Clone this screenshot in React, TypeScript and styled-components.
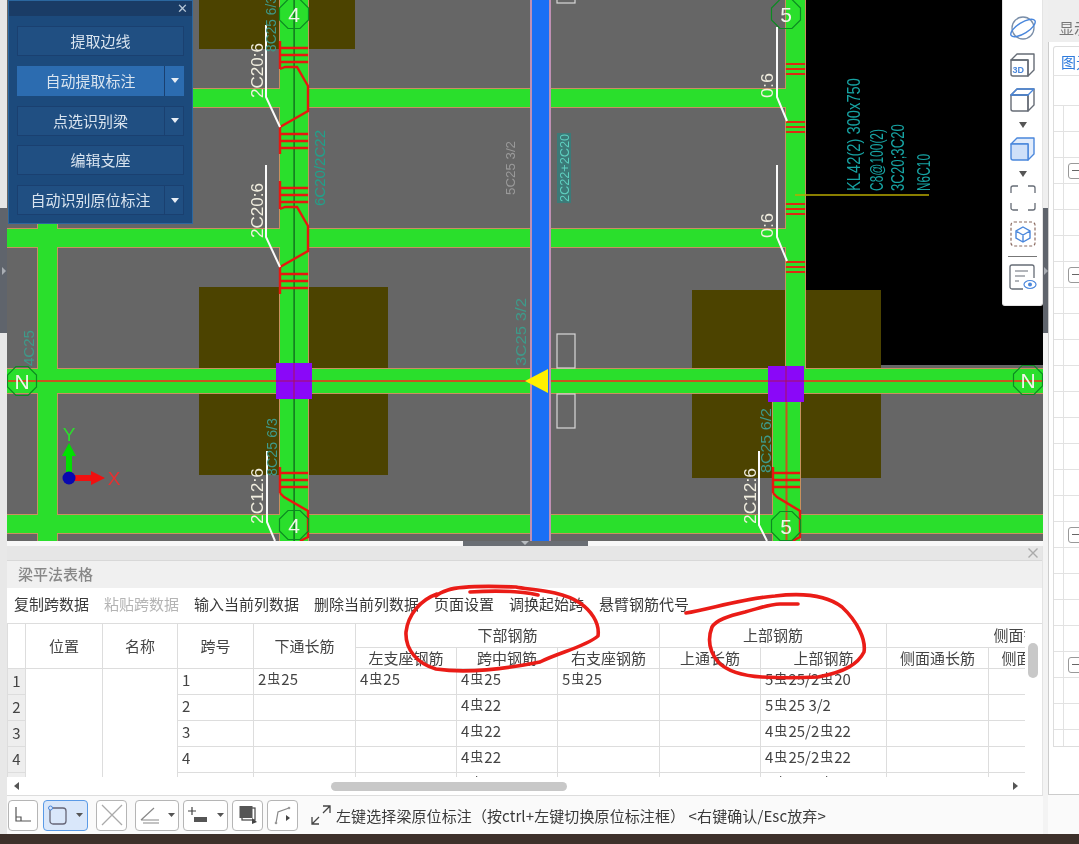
import React from "react";
import styled, { createGlobalStyle } from "styled-components";

const CJK = `"Noto Sans CJK SC", "Noto Sans", sans-serif`;

const Global = createGlobalStyle`
  html, body { margin: 0; padding: 0; background: #fff; overflow: hidden; }
  #root { width: 1079px; height: 844px; }
`;

const Shell = styled.div`
  width: 1079px;
  height: 844px;
  display: flex;
  flex-direction: column;
  font-family: ${CJK};
  overflow: hidden;
  filter: blur(0.35px);
`;
const Main = styled.div`
  flex: 0 0 834px;
  display: flex;
  background: #fafafa;
`;
const Taskbar = styled.div`
  flex: 0 0 10px;
  background: #3d302a;
`;
const EdgeRail = styled.div<{ $top: string; $bottom: string; $width: number }>`
  flex: 0 0 ${(p) => p.$width}px;
  display: flex;
  flex-direction: column;
  background: ${(p) => p.$bottom};
  &::before {
    content: "";
    flex: 0 0 208px;
    background: ${(p) => p.$top};
  }
`;
const EdgeGrip = styled.div`
  flex: 0 0 125px;
  background: #5f646c;
  display: flex;
  align-items: center;
  justify-content: center;
  &::after {
    content: "";
    border-top: 4px solid transparent;
    border-bottom: 4px solid transparent;
    border-left: 4px solid #a9adb3;
  }
`;
const Workspace = styled.div`
  flex: 0 0 1036px;
  display: flex;
  flex-direction: column;
  position: relative;
`;
const Canvas = styled.div`
  flex: 0 0 541px;
  position: relative;
  overflow: hidden;
  background: #666;
`;
const Drawing = styled.svg`
  display: block;
  width: 1036px;
  height: 541px;
`;
const FloatPanel = styled.div`
  position: absolute;
  left: 1px;
  top: 0;
  width: 185px;
  height: 224px;
  box-sizing: border-box;
  background: #1c4a7c;
  border: 1px solid #2b679f;
  display: flex;
  flex-direction: column;
`;
const FloatHead = styled.div`
  flex: 0 0 15px;
  background: #1a3c66;
  display: flex;
  justify-content: flex-end;
  align-items: center;
  padding-right: 4px;
  color: #b8c8d8;
  font: 13px/15px "Liberation Sans", sans-serif;
`;
const FloatList = styled.div`
  padding: 10px 8px 0 8px;
  display: flex;
  flex-direction: column;
  gap: 9.8px;
`;
const FloatButton = styled.div<{ $active?: boolean }>`
  height: 30px;
  display: flex;
  background: ${(p) => (p.$active ? "#2c6cb0" : "#204f82")};
  box-shadow: inset 0 0 0 1px ${(p) => (p.$active ? "#2c6cb0" : "#1a4070")};
  color: #d9e4ef;
  font-size: 15px;
  line-height: 30px;
`;
const FloatLabel = styled.div`
  flex: 1;
  text-align: center;
  white-space: nowrap;
`;
const FloatCaret = styled.div`
  flex: 0 0 19px;
  border-left: 1px solid #1a4070;
  display: flex;
  align-items: center;
  justify-content: center;
  &::after {
    content: "";
    border-left: 4.5px solid transparent;
    border-right: 4.5px solid transparent;
    border-top: 5px solid #e8eef5;
  }
`;
const ViewBar = styled.div`
  position: absolute;
  right: 0;
  top: 0;
  width: 41px;
  height: 306px;
  box-sizing: border-box;
  padding-top: 10px;
  background: #fff;
  border: 1px solid #e4e4e4;
  border-top: 0;
  border-radius: 0 0 3px 3px;
  display: flex;
  flex-direction: column;
  align-items: center;
`;
const ViewSlot = styled.div<{ $h: number }>`
  flex: 0 0 ${(p) => p.$h}px;
  display: flex;
  align-items: center;
  justify-content: center;
`;
const ViewCaret = styled.div`
  width: 0;
  border-left: 4px solid transparent;
  border-right: 4px solid transparent;
  border-top: 6px solid #555;
`;
const ViewRule = styled.div`
  flex: 0 0 1px;
  width: 29px;
  background: #777;
`;
const Splitter = styled.div`
  flex: 0 0 5px;
  background: #f8f8f8;
  display: flex;
  justify-content: center;
`;
const SplitTab = styled.div`
  width: 125px;
  background: #6a6e74;
  display: flex;
  justify-content: center;
  &::after {
    content: "";
    height: 0;
    border-left: 4px solid transparent;
    border-right: 4px solid transparent;
    border-top: 4px solid #b8bcc0;
  }
`;
const Panel = styled.div`
  flex: 0 0 250px;
  display: flex;
  flex-direction: column;
  background: #fff;
  border-bottom: 1px solid #ddd;
  border-right: 1px solid #e3e3e3;
  box-sizing: border-box;
`;
const PanelClose = styled.div`
  flex: 0 0 15px;
  box-sizing: border-box;
  background: #e6e6e6;
  border-bottom: 1px solid #d8d8d8;
  display: flex;
  justify-content: flex-end;
  align-items: center;
  padding-right: 3px;
`;
const PanelTitle = styled.div`
  flex: 0 0 27px;
  background: #f0f0f0;
  padding-left: 11px;
  color: #888;
  font-size: 15px;
  font-weight: 500;
  line-height: 26px;
`;
const PanelTools = styled.div`
  flex: 0 0 35px;
  box-sizing: border-box;
  display: flex;
  align-items: center;
  gap: 15px;
  padding: 0 0 5px 7px;
  font-size: 15px;
  color: #333;
`;
const ToolLink = styled.span<{ $off?: boolean }>`
  color: ${(p) => (p.$off ? "#b4b4b4" : "#3a3a3a")};
  white-space: nowrap;
`;
const GridRow = styled.div`
  flex: 0 0 154px;
  display: flex;
  border-top: 1px solid #ddd;
  box-sizing: border-box;
`;
const TableClip = styled.div`
  width: 1018px;
  height: 153px;
  overflow: hidden;
`;
const Sheet = styled.table`
  table-layout: fixed;
  width: 1153px;
  border-collapse: collapse;
  font-size: 15px;
  color: #444;
`;
const Th = styled.th<{ $tall?: boolean }>`
  box-sizing: border-box;
  height: ${(p) => (p.$tall ? 23 : 21)}px;
  padding: 0;
  font-weight: 400;
  text-align: center;
  line-height: 18px;
  white-space: nowrap;
  overflow: hidden;
  border: 1px solid #ddd;
  border-top: 0;
`;
const RowNo = styled.td`
  box-sizing: border-box;
  height: 26px;
  padding: 0;
  text-align: center;
  background: #eee;
  border: 1px solid #ddd;
  font-size: 15px;
  line-height: 20px;
  color: #444;
`;
const Td = styled.td`
  box-sizing: border-box;
  height: 26px;
  padding: 0 0 3px 4px;
  line-height: 20px;
  white-space: nowrap;
  overflow: hidden;
  border: 1px solid #ddd;
`;
const RebarMark = styled.span`
  font-size: 13px;
  position: relative;
  top: -2px;
  margin: 0 1px;
`;
const VScroll = styled.div`
  flex: 1;
  padding: 19px 0 0 3px;
`;
const VThumb = styled.div`
  width: 10px;
  height: 35px;
  border-radius: 5px;
  background: #c8c8c8;
`;
const HScroll = styled.div`
  flex: 1;
  display: flex;
  align-items: center;
  padding: 0 24px 0 7px;
`;
const Arrow = styled.div<{ $right?: boolean }>`
  width: 0;
  border-top: 4.5px solid transparent;
  border-bottom: 4.5px solid transparent;
  ${(p) => (p.$right ? "border-left: 5px solid #555;" : "border-right: 5px solid #555;")}
`;
const HTrack = styled.div`
  flex: 1;
  padding-left: 312px;
`;
const HThumb = styled.div`
  width: 236px;
  height: 9px;
  border-radius: 5px;
  background: #c8c8c8;
`;
const Status = styled.div`
  flex: 0 0 38px;
  display: flex;
  align-items: center;
  padding-left: 1px;
  background: #fafafa;
`;
const ToolBtn = styled.div<{ $w: number; $on?: boolean; $ml: number }>`
  width: ${(p) => p.$w}px;
  height: 31px;
  margin-left: ${(p) => p.$ml}px;
  box-sizing: border-box;
  border: 1px solid ${(p) => (p.$on ? "#5a9ae6" : "#b5b5b5")};
  border-radius: 4px;
  background: ${(p) => (p.$on ? "#d9e7fa" : "#fff")};
  display: flex;
  align-items: center;
  justify-content: center;
`;
const StatusGlyph = styled.div`
  margin-left: 13px;
  display: flex;
  align-items: center;
`;
const StatusText = styled.div`
  margin-left: 5px;
  font-size: 15px;
  letter-spacing: 0.1px;
  color: #3a3a3a;
  white-space: pre;
`;
const Side = styled.div`
  flex: 1;
  height: 834px;
  overflow: hidden;
  display: flex;
  flex-direction: column;
`;
const SideHead = styled.div`
  flex: 0 0 42px;
  min-height: 0;
  overflow: hidden;
  background: #eee;
  padding-left: 11px;
  font-size: 15px;
  line-height: 56px;
  color: #777;
  white-space: nowrap;
`;
const SideBody = styled.div`
  flex: 0 0 753px;
  box-sizing: border-box;
  border-left: 1px solid #ccc;
  border-bottom: 1px solid #ccc;
  padding: 4px 0 0 4px;
  background: #fff;
`;
const SideTab = styled.div`
  width: 60px;
  height: 29px;
  box-sizing: border-box;
  border: 1px solid #ddd;
  border-bottom: 0;
  border-radius: 3px 0 0 0;
  padding-left: 7px;
  font-size: 15px;
  line-height: 29px;
  color: #2f7bdc;
  white-space: nowrap;
`;
const SideTree = styled.div`
  height: 672px;
  box-sizing: border-box;
  border: 1px solid #ddd;
  border-right: 0;
  border-top: 1px solid #e4e4e4;
  padding-top: 29px;
  overflow: hidden;
`;
const TreeRow = styled.div`
  height: 26px;
  box-sizing: border-box;
  border-top: 1px solid #e2e2e2;
  display: flex;
  align-items: center;
  &::before {
    content: "";
    flex: 0 0 9px;
    align-self: stretch;
    border-right: 1px solid #e2e2e2;
  }
`;
const Minus = styled.div`
  margin-left: 4px;
  flex: 0 0 20px;
  height: 16px;
  box-sizing: border-box;
  border: 1px solid #999;
  border-radius: 3px;
  display: flex;
  align-items: center;
  padding-left: 3px;
  &::after {
    content: "";
    width: 7px;
    height: 1px;
    background: #666;
  }
`;
const Ink = styled.svg`
  position: absolute;
  left: 0;
  top: 0;
  width: 1036px;
  height: 834px;
  pointer-events: none;
`;

const VLabel = ({ x, y, len, color, size = 15, children }: { x: number; y: number; len: number; color: string; size?: number; children: string }) => (
  <text
    x={x}
    y={y}
    transform={`rotate(-90 ${x} ${y})`}
    textLength={len}
    lengthAdjust="spacingAndGlyphs"
    fill={color}
    fontSize={size}
    fontFamily='"Liberation Sans", sans-serif'
  >
    {children}
  </text>
);

const Axis = ({ x, y, label }: { x: number; y: number; label: string }) => (
  <g>
    <polygon
      points={`${x - 6},${y - 14.5} ${x + 6},${y - 14.5} ${x + 14.5},${y - 6} ${x + 14.5},${y + 6} ${x + 6},${y + 14.5} ${x - 6},${y + 14.5} ${x - 14.5},${y + 6} ${x - 14.5},${y - 6}`}
      fill="none"
      stroke="#0c8a22"
      strokeWidth="1.2"
    />
    <text x={x} y={y + 7.5} textAnchor="middle" fill="#f4f4ec" fontSize="21" fontFamily='"Liberation Sans", sans-serif'>
      {label}
    </text>
  </g>
);

const beamsH: [number, number, number, number][] = [
  [185, 89, 610, 18],
  [7, 229, 790, 18],
  [7, 369, 1036, 24],
  [7, 515, 1036, 18],
];
const beamsV: [number, number, number, number][] = [
  [38, 224, 19, 317],
  [280, 0, 28, 541],
  [786, 0, 19, 393],
  [773, 393, 27, 148],
];

const Stirrup = ({ dy }: { dy: number }) => (
  <g transform={`translate(0 ${dy})`} fill="none" stroke="#e8170f" strokeWidth="2.4">
    <path d="M280 41V69M280 48H308M280 55H308M280 62H308" />
    <path d="M280 69L285 67H297L308 86V111L280 127" />
    <path d="M280 127V154M280 134H308M280 141H308M280 148H308" />
  </g>
);
const Ties = ({ y }: { y: number }) => (
  <path d={`M786 ${y}H805M786 ${y + 5}H805M786 ${y + 10}H805`} fill="none" stroke="#dd2a12" strokeWidth="2.2" />
);
const BottomStirrup = ({ dx, w }: { dx: number; w: number }) => (
  <g fill="none" stroke="#e8170f" strokeWidth="2.4">
    <path d={`M${dx} 467V493M${dx} 473H${dx + w}M${dx} 480H${dx + w}M${dx} 487H${dx + w}`} />
    <path d={`M${dx} 493L${dx + 4} 497L${dx + w} 511V537L${dx + w - 8} 541`} />
  </g>
);

const CadDrawing = () => (
  <Drawing viewBox="7 0 1036 541">
    <rect x="7" y="0" width="1036" height="541" fill="#666" />
    <rect x="806" y="0" width="237" height="365" fill="#000" />
    <rect x="199" y="0" width="156" height="49" fill="#4c4300" />
    <rect x="199" y="287" width="189" height="188" fill="#4c4300" />
    <rect x="692" y="290" width="189" height="188" fill="#4c4300" />
    {[...beamsH, ...beamsV].map(([x, y, w, h], i) => (
      <rect key={i} x={x - 1} y={y - 1} width={w + 2} height={h + 2} fill="#c9905f" />
    ))}
    {[...beamsH, ...beamsV].map(([x, y, w, h], i) => (
      <rect key={i} x={x} y={y} width={w} height={h} fill="#2adf2c" />
    ))}
    <rect x="7" y="380" width="1036" height="2" fill="#c8551f" />
    <rect x="293.5" y="0" width="1.2" height="541" fill="#0d5a1c" />
    <rect x="785.5" y="393" width="2" height="148" fill="#c8551f" />
    <rect x="530" y="0" width="21" height="541" fill="#c090b4" />
    <rect x="532" y="0" width="17" height="541" fill="#1a6ff5" />
    <rect x="276" y="363" width="36" height="36" fill="#8a08f8" />
    <rect x="768" y="366" width="36" height="36" fill="#8a08f8" />
    <path d="M294 363V399M276 381H312M768 381H804M786 366V402" stroke="#a8105a" strokeWidth="1" />
    <polygon points="548,369 548,393 525,381" fill="#fff000" />
    <g fill="none" stroke="#d8d8d8" strokeWidth="1.2">
      <rect x="557" y="-5" width="18" height="8" />
      <rect x="557" y="334" width="18" height="34" />
      <rect x="557" y="394" width="18" height="34" />
    </g>
    <Stirrup dy={0} />
    <Stirrup dy={140} />
    <BottomStirrup dx={280} w={28} />
    <BottomStirrup dx={773} w={27} />
    {[64, 122, 204, 262].map((y) => (
      <Ties key={y} y={y} />
    ))}
    <g fill="none" stroke="#fafafa" strokeWidth="2">
      <path d="M266 25V97L280 127" />
      <path d="M266 165V237L280 267" />
      <path d="M267 451V522L275 541" />
      <path d="M777 27V97L787 121" />
      <path d="M777 165V237L787 261" />
      <path d="M759 451V525L767 541" />
    </g>
    <path d="M795 195H929" stroke="#b8a800" strokeWidth="1.5" />

    <VLabel x={263} y={98} len={55} color="#f2efe0" size={16}>2C20:6</VLabel>
    <VLabel x={263} y={238} len={55} color="#f2efe0" size={16}>2C20:6</VLabel>
    <VLabel x={263} y={524} len={56} color="#f2efe0" size={16}>2C12:6</VLabel>
    <VLabel x={756} y={524} len={56} color="#f2efe0" size={16}>2C12:6</VLabel>
    <VLabel x={773} y={98} len={25} color="#f2efe0" size={16}>0:6</VLabel>
    <VLabel x={773} y={238} len={25} color="#f2efe0" size={16}>0:6</VLabel>

    <VLabel x={860} y={191} len={113} color="#17a3a3" size={18}>KL42(2) 300x750</VLabel>
    <VLabel x={883} y={191} len={62} color="#17a3a3" size={18}>C8@100(2)</VLabel>
    <VLabel x={904} y={191} len={67} color="#17a3a3" size={18}>3C20;3C20</VLabel>
    <VLabel x={930} y={191} len={37} color="#17a3a3" size={18}>N6C10</VLabel>

    <VLabel x={276} y={52} len={56} color="#3e9a8a" size={15}>8C25 6/3</VLabel>
    <VLabel x={325} y={206} len={76} color="#22a08a" size={15}>6C20/2C22</VLabel>
    <VLabel x={515} y={195} len={54} color="#9a9a9a" size={12}>5C25 3/2</VLabel>
    <rect x="557" y="133" width="14" height="70" fill="#3c7a78" />
    <VLabel x={569} y={202} len={68} color="#5fd0c0" size={13}>2C22+2C20</VLabel>
    <VLabel x={277} y={476} len={58} color="#3e9a8a" size={15}>8C25 6/3</VLabel>
    <VLabel x={771} y={473} len={65} color="#3e9a8a" size={15}>8C25 6/2</VLabel>
    <VLabel x={526} y={366} len={68} color="#3e9a8a" size={15}>3C25 3/2</VLabel>
    <VLabel x={34} y={366} len={36} color="#3e9a8a" size={14}>4C25</VLabel>

    <Axis x={294} y={14} label="4" />
    <Axis x={786} y={14} label="5" />
    <Axis x={22} y={381} label="N" />
    <Axis x={1028} y={380} label="N" />
    <Axis x={294} y={525} label="4" />
    <Axis x={786} y={526} label="5" />

    <rect x="66" y="452" width="6" height="26" fill="#00e000" />
    <polygon points="69,443 62,456 76,456" fill="#00e000" />
    <rect x="69" y="475" width="24" height="6" fill="#f01010" />
    <polygon points="105,478 91,471 91,485" fill="#f01010" />
    <circle cx="69" cy="478" r="6.5" fill="#0808b0" />
    <text x="69" y="441" textAnchor="middle" fill="#2adf2c" fontSize="19" fontFamily='"Liberation Sans", sans-serif'>Y</text>
    <text x="114" y="485" textAnchor="middle" fill="#e83030" fontSize="19" fontFamily='"Liberation Sans", sans-serif'>X</text>
  </Drawing>
);

const stroke = { fill: "none", stroke: "#666c76", strokeWidth: 1.3 };
const blue = "#4a87dc";

const IconSphere = () => (
  <svg width="28" height="26" viewBox="0 0 28 26">
    <circle cx="14" cy="13" r="11" fill="none" stroke="#7a8ea8" strokeWidth="1.3" />
    <ellipse cx="14" cy="13" rx="14" ry="5.5" transform="rotate(-32 14 13)" fill="none" stroke={blue} strokeWidth="1.4" />
  </svg>
);
const CubeLines = ({ color, front, side }: { color: string; front: string; side: string }) => (
  <>
    <path d="M2 8L8 2H25V18L19 24V8Z" fill={side} stroke={color} strokeWidth="1.4" strokeLinejoin="round" />
    <path d="M2 8H19V24H4a2 2 0 0 1-2-2Z" fill={front} stroke={color} strokeWidth="1.4" strokeLinejoin="round" />
  </>
);
const Icon3D = () => (
  <svg width="27" height="26" viewBox="0 0 27 26">
    <CubeLines color="#666c76" front="none" side="none" />
    <text x="3.5" y="21" fontSize="9" fontWeight="700" fill={blue} fontFamily='"Liberation Sans", sans-serif'>3D</text>
  </svg>
);
const IconWire = () => (
  <svg width="27" height="26" viewBox="0 0 27 26">
    <CubeLines color="#666c76" front="none" side="none" />
    <path d="M2 8L8 2H25L19 8Z" fill="none" stroke={blue} strokeWidth="1.4" strokeLinejoin="round" />
  </svg>
);
const IconSolid = () => (
  <svg width="27" height="26" viewBox="0 0 27 26">
    <CubeLines color={blue} front="#cfe0f9" side="#e2ecfb" />
  </svg>
);
const IconCorners = () => (
  <svg width="26" height="26" viewBox="0 0 26 26">
    <path d="M1 8V3a2 2 0 0 1 2-2H8M18 1h5a2 2 0 0 1 2 2V8M25 18v5a2 2 0 0 1-2 2H18M8 25H3a2 2 0 0 1-2-2V18" {...stroke} />
  </svg>
);
const IconDashedCube = () => (
  <svg width="26" height="26" viewBox="0 0 26 26">
    <rect x="1" y="1" width="24" height="24" rx="3" fill="none" stroke="#8a6a60" strokeWidth="1.2" strokeDasharray="3 2" />
    <path d="M13 6L20 10V17L13 21L6 17V10ZM6 10L13 14L20 10M13 14V21" fill="none" stroke={blue} strokeWidth="1.4" />
  </svg>
);
const IconDoc = () => (
  <svg width="28" height="26" viewBox="0 0 28 26">
    <path d="M14 25H3a2 2 0 0 1-2-2V3a2 2 0 0 1 2-2H23a2 2 0 0 1 2 2V14" {...stroke} />
    <path d="M6 7H19M6 12H16M6 17H10" stroke="#666c76" strokeWidth="1.2" />
    <ellipse cx="21" cy="20.5" rx="6" ry="4" fill="#fff" stroke={blue} strokeWidth="1.2" />
    <circle cx="21" cy="20.5" r="2" fill={blue} />
  </svg>
);
const MiniCaret = () => (
  <svg width="7" height="5" viewBox="0 0 7 5">
    <polygon points="0,0 7,0 3.5,4" fill="#555" />
  </svg>
);
const BtnRow = styled.div`
  display: flex;
  align-items: center;
  gap: 8px;
`;

const Rebar = ({ value }: { value: string }) => {
  const parts = value.split("#");
  return (
    <>
      {parts.map((p, i) => (
        <React.Fragment key={i}>
          {i > 0 && <RebarMark>虫</RebarMark>}
          {p}
        </React.Fragment>
      ))}
    </>
  );
};

const rows: { n: string; a: string; b: string; c: string; d: string; e: string }[] = [
  { n: "1", a: "2#25", b: "4#25", c: "4#25", d: "5#25", e: "5#25/2#20" },
  { n: "2", a: "", b: "", c: "4#22", d: "", e: "5#25 3/2" },
  { n: "3", a: "", b: "", c: "4#22", d: "", e: "4#25/2#22" },
  { n: "4", a: "", b: "", c: "4#22", d: "", e: "4#25/2#22" },
  { n: "5", a: "", b: "", c: "4#22", d: "", e: "4#25/2#22" },
];
const colWidths = [18, 77, 75, 76, 102, 101, 101, 102, 101, 126, 102, 116, 56];

const floatItems = [
  { label: "提取边线" },
  { label: "自动提取标注", caret: true, active: true },
  { label: "点选识别梁", caret: true },
  { label: "编辑支座" },
  { label: "自动识别原位标注", caret: true },
];
const tools = ["复制跨数据", "粘贴跨数据", "输入当前列数据", "删除当前列数据", "页面设置", "调换起始跨", "悬臂钢筋代号"];
const minusRows = [2, 6, 16, 21];

export default function App() {
  return (
    <>
      <Global />
      <Shell>
        <Main>
          <EdgeRail $top="#e6e6e6" $bottom="#e8e8e8" $width={7}>
            <EdgeGrip />
          </EdgeRail>
          <Workspace>
            <Canvas>
              <CadDrawing />
              <FloatPanel>
                <FloatHead>✕</FloatHead>
                <FloatList>
                  {floatItems.map((f) => (
                    <FloatButton key={f.label} $active={f.active}>
                      <FloatLabel>{f.label}</FloatLabel>
                      {f.caret && <FloatCaret />}
                    </FloatButton>
                  ))}
                </FloatList>
              </FloatPanel>
              <ViewBar>
                <ViewSlot $h={36}><IconSphere /></ViewSlot>
                <ViewSlot $h={38}><Icon3D /></ViewSlot>
                <ViewSlot $h={32}><IconWire /></ViewSlot>
                <ViewSlot $h={18}><ViewCaret /></ViewSlot>
                <ViewSlot $h={30}><IconSolid /></ViewSlot>
                <ViewSlot $h={20}><ViewCaret /></ViewSlot>
                <ViewSlot $h={28}><IconCorners /></ViewSlot>
                <ViewSlot $h={44}><IconDashedCube /></ViewSlot>
                <ViewRule />
                <ViewSlot $h={40}><IconDoc /></ViewSlot>
              </ViewBar>
            </Canvas>
            <Splitter>
              <SplitTab />
            </Splitter>
            <Panel>
              <PanelClose>
                <svg width="12" height="12" viewBox="0 0 12 12">
                  <path d="M1.5 1.5L10.5 10.5M10.5 1.5L1.5 10.5" stroke="#aaa" strokeWidth="1.4" />
                </svg>
              </PanelClose>
              <PanelTitle>梁平法表格</PanelTitle>
              <PanelTools>
                {tools.map((t) => (
                  <ToolLink key={t} $off={t === "粘贴跨数据"}>{t}</ToolLink>
                ))}
              </PanelTools>
              <GridRow>
                <TableClip>
                  <Sheet>
                    <colgroup>
                      {colWidths.map((w, i) => (
                        <col key={i} width={w} />
                      ))}
                    </colgroup>
                    <thead>
                      <tr>
                        <Th $tall rowSpan={2}></Th>
                        <Th $tall rowSpan={2}>位置</Th>
                        <Th $tall rowSpan={2}>名称</Th>
                        <Th $tall rowSpan={2}>跨号</Th>
                        <Th $tall rowSpan={2}>下通长筋</Th>
                        <Th $tall colSpan={3}>下部钢筋</Th>
                        <Th $tall colSpan={2}>上部钢筋</Th>
                        <Th $tall colSpan={3}>侧面钢筋</Th>
                      </tr>
                      <tr>
                        <Th>左支座钢筋</Th>
                        <Th>跨中钢筋</Th>
                        <Th>右支座钢筋</Th>
                        <Th>上通长筋</Th>
                        <Th>上部钢筋</Th>
                        <Th>侧面通长筋</Th>
                        <Th>侧面原位钢筋</Th>
                        <Th>拉筋</Th>
                      </tr>
                    </thead>
                    <tbody>
                      {rows.map((r, i) => (
                        <tr key={r.n}>
                          <RowNo>{r.n}</RowNo>
                          {i === 0 && <Td rowSpan={5} />}
                          {i === 0 && <Td rowSpan={5} />}
                          <Td>{r.n}</Td>
                          <Td><Rebar value={r.a} /></Td>
                          <Td><Rebar value={r.b} /></Td>
                          <Td><Rebar value={r.c} /></Td>
                          <Td><Rebar value={r.d} /></Td>
                          <Td />
                          <Td><Rebar value={r.e} /></Td>
                          <Td />
                          <Td />
                          <Td />
                        </tr>
                      ))}
                    </tbody>
                  </Sheet>
                </TableClip>
                <VScroll>
                  <VThumb />
                </VScroll>
              </GridRow>
              <HScroll>
                <Arrow />
                <HTrack>
                  <HThumb />
                </HTrack>
                <Arrow $right />
              </HScroll>
            </Panel>
            <Status>
              <ToolBtn $w={30} $ml={0}>
                <svg width="18" height="18" viewBox="0 0 18 18">
                  <path d="M2 1V15H17M2 11H7V15" fill="none" stroke="#555" strokeWidth="1.2" />
                </svg>
              </ToolBtn>
              <ToolBtn $w={45} $ml={5} $on>
                <BtnRow>
                  <svg width="20" height="20" viewBox="0 0 20 20">
                    <rect x="2" y="3" width="16" height="16" rx="3" fill="none" stroke="#667" strokeWidth="1.3" />
                    <circle cx="2.5" cy="3" r="2" fill="#d9e7fa" stroke="#4a87dc" />
                  </svg>
                  <MiniCaret />
                </BtnRow>
              </ToolBtn>
              <ToolBtn $w={31} $ml={8}>
                <svg width="24" height="24" viewBox="0 0 24 24">
                  <path d="M2 2L22 22M22 2L2 22" stroke="#aaa" strokeWidth="1.3" />
                </svg>
              </ToolBtn>
              <ToolBtn $w={44} $ml={8}>
                <BtnRow>
                  <svg width="20" height="18" viewBox="0 0 20 18">
                    <path d="M1 14L14 2M1 14H19M3 17H19" fill="none" stroke="#888" strokeWidth="1.2" />
                  </svg>
                  <MiniCaret />
                </BtnRow>
              </ToolBtn>
              <ToolBtn $w={45} $ml={4}>
                <BtnRow>
                  <svg width="22" height="18" viewBox="0 0 22 18">
                    <path d="M5 1V9M1 5H9" stroke="#444" strokeWidth="1.2" />
                    <rect x="7" y="11" width="13" height="5" fill="#555" />
                  </svg>
                  <MiniCaret />
                </BtnRow>
              </ToolBtn>
              <ToolBtn $w={31} $ml={4}>
                <svg width="20" height="20" viewBox="0 0 20 20">
                  <rect x="4" y="3" width="13" height="12" fill="#fff" stroke="#444" strokeWidth="1.2" />
                  <rect x="1.5" y="1" width="13" height="12" fill="#555" />
                  <polygon points="14,13 19,17 14,19" fill="#444" />
                </svg>
              </ToolBtn>
              <ToolBtn $w={31} $ml={4}>
                <svg width="20" height="20" viewBox="0 0 20 20">
                  <path d="M3 18L5 7L16 3" fill="none" stroke="#888" strokeWidth="1.2" />
                  <circle cx="3" cy="18" r="1.3" fill="#999" />
                  <circle cx="16" cy="3" r="1.3" fill="#999" />
                  <polygon points="13,10 17,13 13,16" fill="#444" />
                </svg>
              </ToolBtn>
              <StatusGlyph>
                <svg width="20" height="20" viewBox="0 0 20 20">
                  <path d="M1 19L8 12M1 12V19H8M12 8L19 1M12 1H19V8" fill="none" stroke="#444" strokeWidth="1.3" />
                </svg>
              </StatusGlyph>
              <StatusText>左键选择梁原位标注（按ctrl+左键切换原位标注框） &lt;右键确认/Esc放弃&gt;</StatusText>
            </Status>
            <Ink viewBox="7 0 1036 834">
              <g fill="none" stroke="#ea1c17" strokeWidth="3.6" strokeLinecap="round" strokeLinejoin="round">
                <path d="M437 594C420 600 408 615 406 632C405 650 418 664 436 669C470 674 510 668 540 662C560 652 585 647 598 636C600 622 590 610 580 603C560 590 530 590 516 587C490 586 460 586 448 590C442 592 438 594 436 596" />
                <path d="M470 592C500 590 520 591 538 595" />
                <path d="M686 613C710 609 745 598 775 596C800 593 825 594 842 607C858 622 866 640 864 652C858 664 845 672 818 677C800 678 780 678 762 677C745 676 728 672 718 662C710 652 707 640 712 627C716 620 728 616 745 612C760 608 770 604 780 604H798" />
              </g>
            </Ink>
          </Workspace>
          <EdgeRail $top="#efefef" $bottom="#f3f3f3" $width={5}>
            <EdgeGrip />
          </EdgeRail>
          <Side>
            <SideHead>显示设置</SideHead>
            <SideBody>
              <SideTab>图元显示</SideTab>
              <SideTree>
                {Array.from({ length: 25 }, (_, i) => (
                  <TreeRow key={i}>{minusRows.includes(i) && <Minus />}</TreeRow>
                ))}
              </SideTree>
            </SideBody>
          </Side>
        </Main>
        <Taskbar />
      </Shell>
    </>
  );
}
